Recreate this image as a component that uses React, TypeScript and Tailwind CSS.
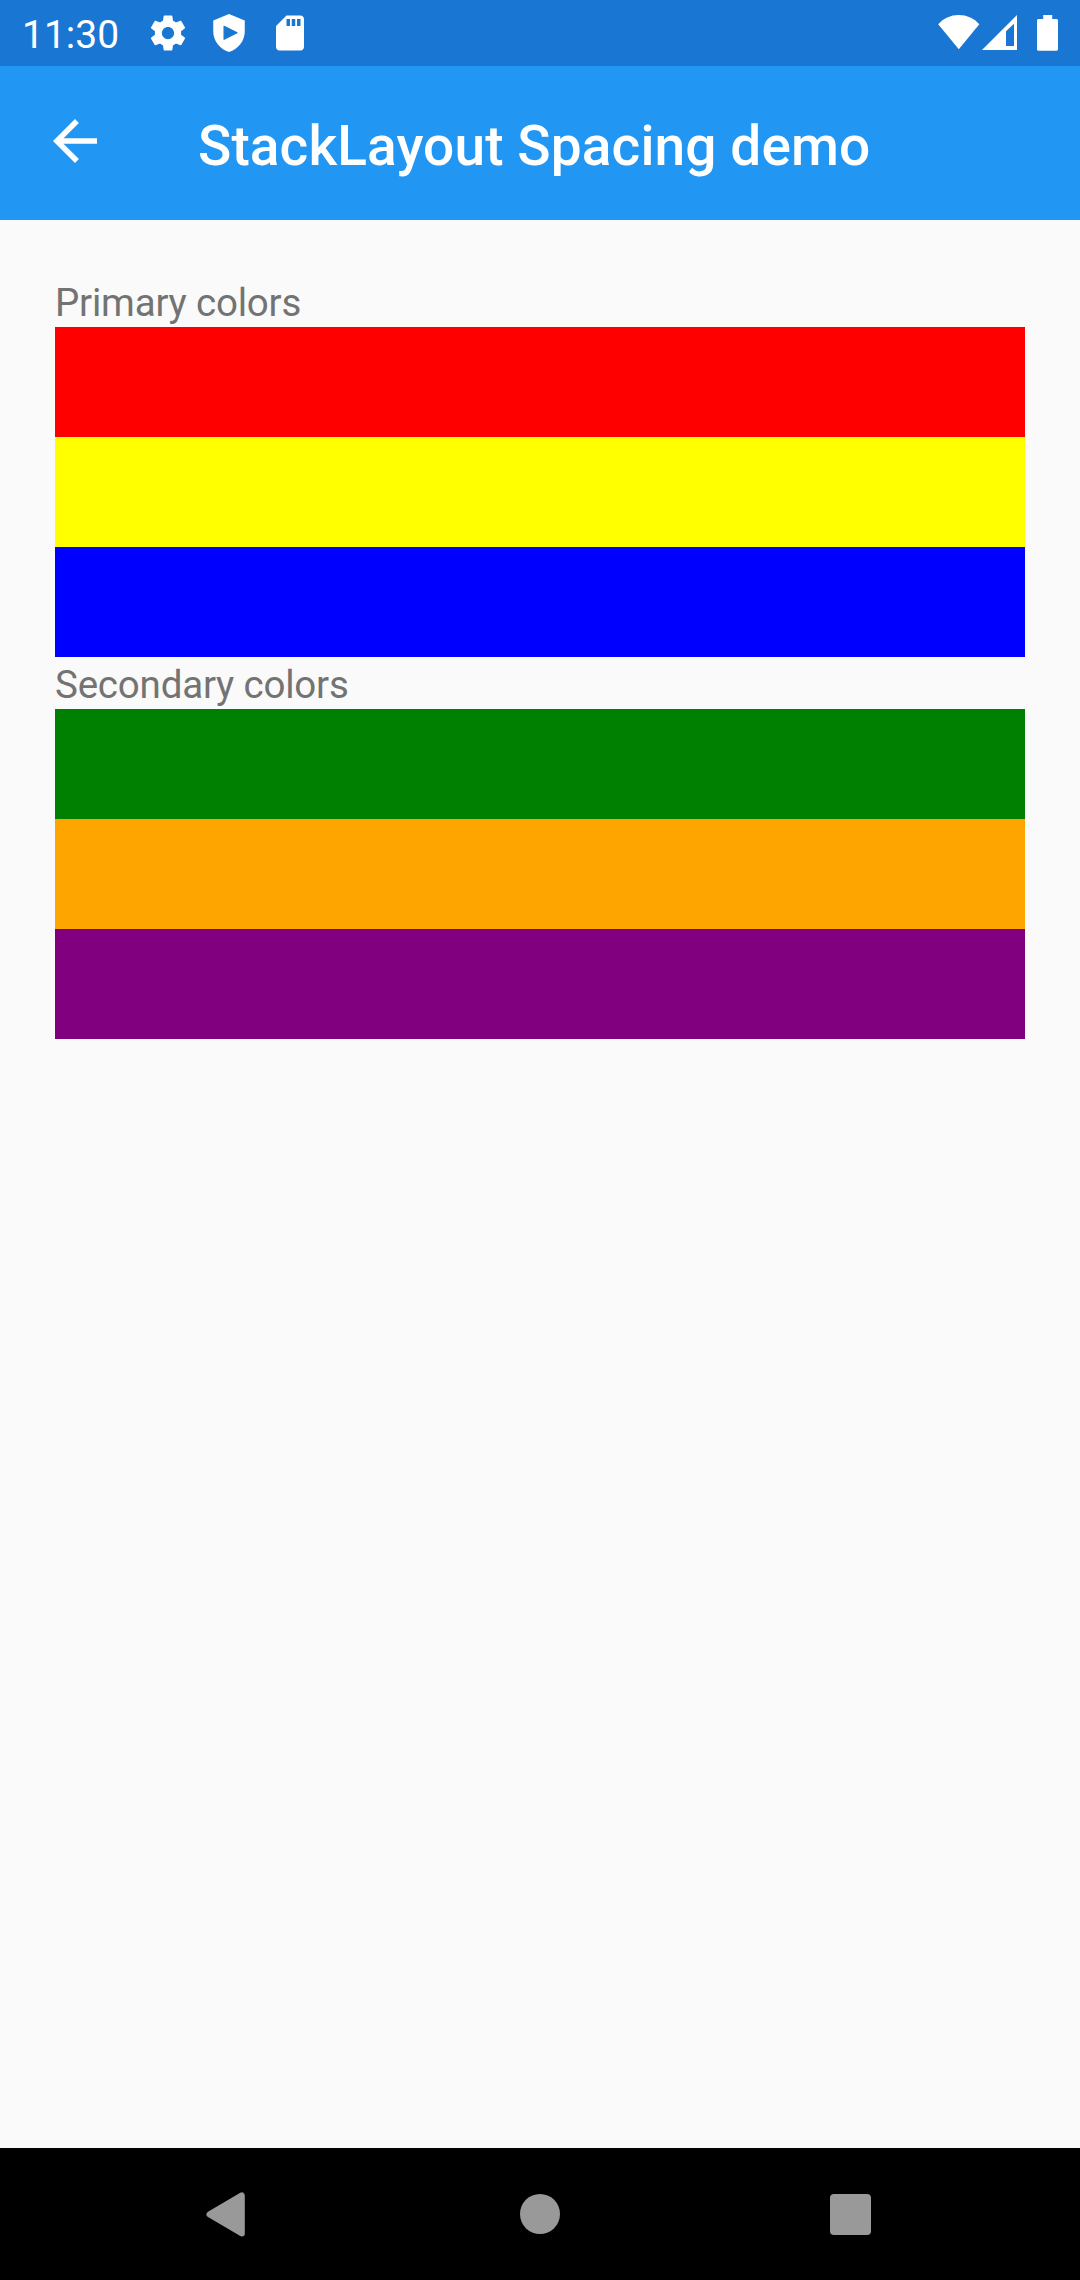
const primary = ["bg-[#ff0000]", "bg-[#ffff00]", "bg-[#0000ff]"];
const secondary = ["bg-[#008000]", "bg-[#ffa500]", "bg-[#800080]"];

function StatusBar() {
  return (
    <div className="flex h-[66px] shrink-0 items-center justify-between bg-[#1976d2] pr-[22px] pl-[22px] text-white">
      <div className="flex items-center">
        <span className="w-[125px] pt-[3px] text-[39px] leading-[66px]">11:30</span>
        <div className="flex gap-[19px]">
          <svg className="size-[42px]" viewBox="0 0 24 24" fill="currentColor">
            <path d="M19.43 12.98c.04-.32.07-.64.07-.98s-.03-.66-.07-.98l2.11-1.65c.19-.15.24-.42.12-.64l-2-3.46c-.12-.22-.39-.3-.61-.22l-2.49 1c-.52-.4-1.08-.73-1.69-.98l-.38-2.65C14.46 2.18 14.25 2 14 2h-4c-.25 0-.46.18-.49.42l-.38 2.65c-.61.25-1.17.59-1.69.98l-2.49-1c-.23-.09-.49 0-.61.22l-2 3.46c-.13.22-.07.49.12.64l2.11 1.65c-.04.32-.07.65-.07.98s.03.66.07.98l-2.11 1.65c-.19.15-.24.42-.12.64l2 3.46c.12.22.39.3.61.22l2.49-1c.52.4 1.08.73 1.69.98l.38 2.65c.03.24.24.42.49.42h4c.25 0 .46-.18.49-.42l.38-2.65c.61-.25 1.17-.59 1.69-.98l2.49 1c.23.09.49 0 .61-.22l2-3.46c.12-.22.07-.49-.12-.64l-2.11-1.65zM12 15.500c-1.930 0-3.500-1.570-3.500-3.500s1.570-3.500 3.500-3.500 3.500 1.570 3.500 3.500-1.570 3.500-3.500 3.500z" />
          </svg>
          <svg className="size-[42px]" viewBox="0 0 24 24" fill="currentColor">
            <path d="M12 1.1L3 4.8v6.4c0 5.4 3.84 10.3 9 11.6 5.16-1.3 9-6.2 9-11.6V4.8z" />
            <path d="M9.2 8.2v7.4l7.4-3.7z" fill="#1976d2" stroke="#1976d2" strokeWidth="0.7" strokeLinejoin="round" />
          </svg>
          <svg className="size-[42px]" viewBox="0 0 24 24" fill="currentColor">
            <path d="M18 2h-8L4.02 8 4 20c0 1.1.9 2 2 2h12c1.1 0 2-.9 2-2V4c0-1.1-.9-2-2-2zm-6 6h-2V4h2v4zm3 0h-2V4h2v4zm3 0h-2V4h2v4z" />
          </svg>
        </div>
      </div>
      <div className="flex h-[36px] items-start">
        <svg className="h-[35px] w-[42px]" viewBox="0 0 42 35" fill="currentColor">
          <path d="M0.2 9.3C5.5 3.5 12.5 0.1 20.8 0.1S36 3.5 41.3 9.3L20.8 34.3z" />
        </svg>
        <svg className="ml-[2px] h-[35px] w-[35px]" viewBox="0 0 35 35" fill="currentColor">
          <path fillRule="evenodd" d="M0 35L35 0V35zM24 16.3V31H32V8.7z" />
        </svg>
        <svg className="ml-[20px] h-[36px] w-[21px]" viewBox="0 0 21 36" fill="currentColor">
          <path d="M6.2 0h9v4h4.1c1 0 1.7.7 1.7 1.7v28.2c0 1-.7 1.8-1.7 1.8H1.7C.7 35.7 0 34.9 0 33.9V5.7C0 4.7.7 4 1.7 4h4.5z" />
        </svg>
      </div>
    </div>
  );
}

function Header() {
  return (
    <header className="flex h-[154px] shrink-0 items-center bg-[#2196f3] pl-[42px] text-white">
      <svg className="mb-[4px] size-[66px]" viewBox="0 0 24 24" fill="currentColor">
        <path d="M20 11H7.83l5.59-5.59L12 4l-8 8 8 8 1.41-1.41L7.83 13H20v-2z" />
      </svg>
      <h1 className="ml-[90px] pt-[6px] text-[55px] leading-[82px] font-medium tracking-[0.12px]">
        StackLayout Spacing demo
      </h1>
    </header>
  );
}

function ColorGroup({ title, colors }: { title: string; colors: string[] }) {
  return (
    <section>
      <p className="h-[52px] text-[38.5px] leading-[56px] tracking-[-0.2px] text-[#737373]">{title}</p>
      {colors.map((c) => (
        <div key={c} className={`h-[110px] ${c}`} />
      ))}
    </section>
  );
}

function NavigationBar() {
  return (
    <nav className="flex h-[132px] shrink-0 items-center bg-black pl-[206px]">
      <svg className="h-[45px] w-[39px]" viewBox="0 0 39 45">
        <path d="M3.5 22.4L35.8 3.4V41.4z" fill="#999" stroke="#999" strokeWidth="6" strokeLinejoin="round" />
      </svg>
      <div className="ml-[275px] size-[40px] rounded-full bg-[#999999]" />
      <div className="mt-px ml-[270px] size-[41px] rounded-[4px] bg-[#999999]" />
    </nav>
  );
}

export default function App() {
  return (
    <div className="flex h-[2280px] w-[1080px] flex-col bg-[#fafafa] font-[Roboto,sans-serif]">
      <StatusBar />
      <Header />
      <main className="flex grow flex-col px-[55px] pt-[55px]">
        <ColorGroup title="Primary colors" colors={primary} />
        <ColorGroup title="Secondary colors" colors={secondary} />
      </main>
      <NavigationBar />
    </div>
  );
}
